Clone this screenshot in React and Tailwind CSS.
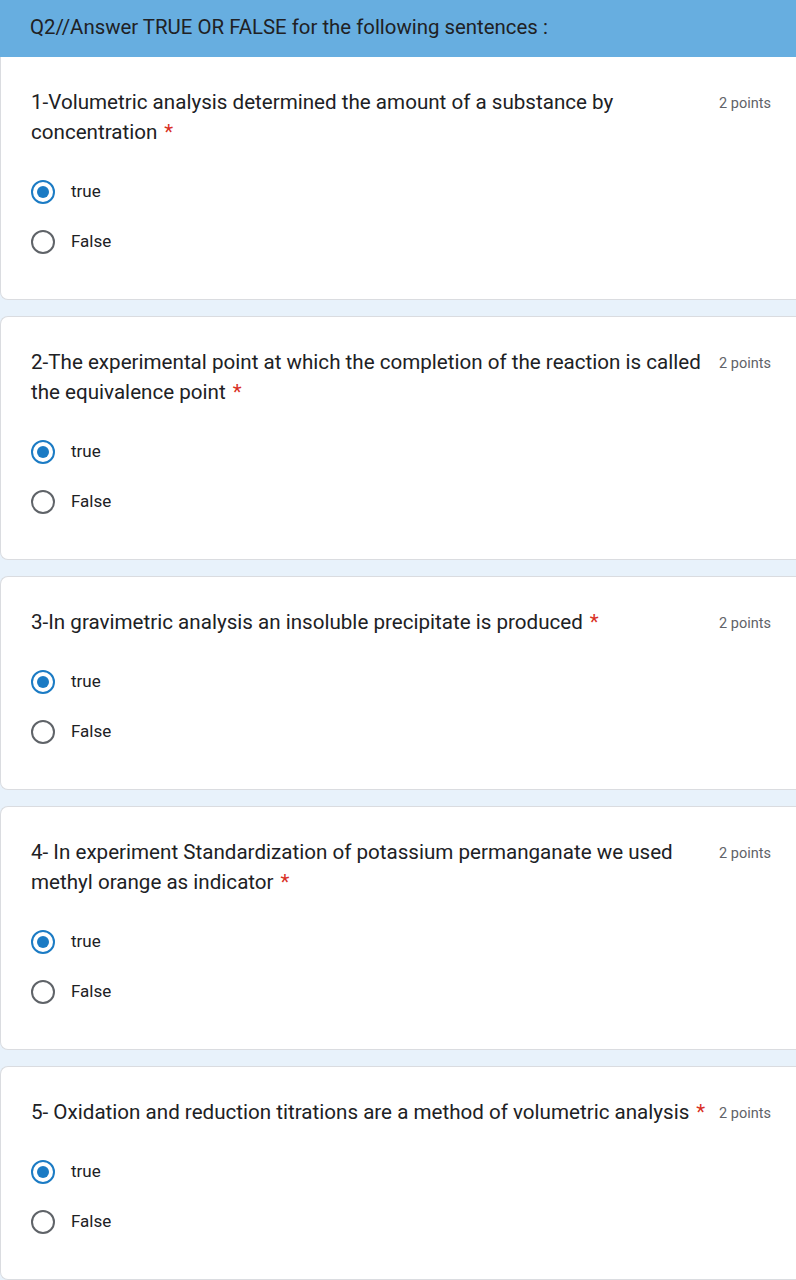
const QUESTIONS = [
  { text: '1-Volumetric analysis determined the amount of a substance by concentration' },
  { text: '2-The experimental point at which the completion of the reaction is called the equivalence point' },
  { text: '3-In gravimetric analysis an insoluble precipitate is produced' },
  { text: '4- In experiment Standardization of potassium permanganate we used methyl orange as indicator' },
  { text: '5- Oxidation and reduction titrations are a method of volumetric analysis' },
];

const Radio = ({ checked }) => (
  <span
    className={
      'flex h-6 w-6 items-center justify-center rounded-full border-2 ' +
      (checked ? 'border-[#1b7bc4]' : 'border-[#5f6368]')
    }
  >
    {checked && <span className="h-3 w-3 rounded-full bg-[#1b7bc4]" />}
  </span>
);

const Option = ({ label, checked }) => (
  <div className="flex h-[50px] items-center">
    <Radio checked={checked} />
    <span className="ml-4 text-[17px] text-[#202124]">{label}</span>
  </div>
);

export default function App() {
  return (
    <div className="min-h-[1280px] bg-[#e8f2fb] font-['Roboto',sans-serif]">
      <div className="flex h-[57px] items-center bg-[#67aee0] px-[30px] pb-[3px] text-[20.4px] text-[#202124]">
        Q2//Answer TRUE OR FALSE for the following sentences :
      </div>

      <div className="flex flex-col gap-4">
        {QUESTIONS.map((q, i) => (
          <div
            key={i}
            className={
              'bg-white border-l border-b border-[#dadce0] pl-[31px] pt-[30px] pb-[32px] ' +
              (i === 0 ? 'rounded-bl-lg' : 'border-t rounded-l-lg')
            }
          >
            <div className="flex items-start">
              <p className="flex-1 -ml-px text-[20.6px] leading-[30px] text-[#202124]">
                {q.text}
                <span className="ml-[7px] text-[#d93025]">*</span>
              </p>
              <span className="ml-[10px] mr-[25px] pt-[7px] text-[14.5px] leading-[20px] text-[#5f6368]">
                2 points
              </span>
            </div>
            <div className="mt-5 -ml-px">
              <Option label="true" checked />
              <Option label="False" />
            </div>
          </div>
        ))}
      </div>
    </div>
  );
}
